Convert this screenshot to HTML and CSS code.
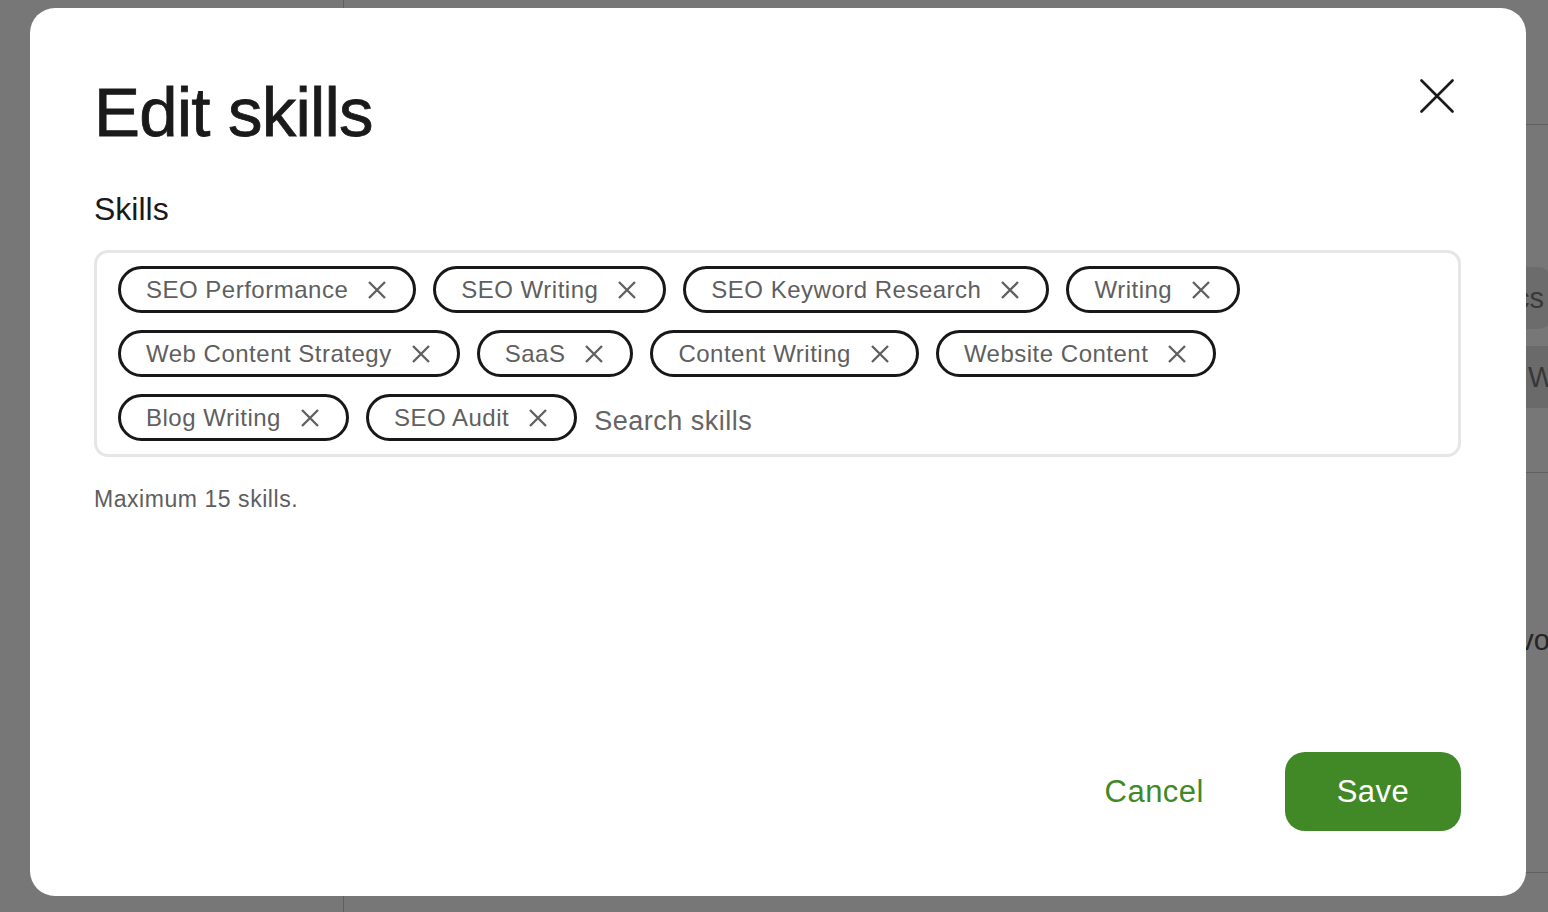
FILE: index.html
```html
<!DOCTYPE html>
<html lang="en">
<head>
  <meta charset="UTF-8">
  <title>Edit skills</title>
  <link rel="stylesheet" href="styles.css">
</head>
<body>
  <div class="page">
    <aside class="sidebar"></aside>
    <main class="main">
      <div class="bar"></div>
      <section class="sect">
        <div class="bg-tags">
          <span class="bg-tag">Analytics</span>
        </div>
        <div class="bg-block">Writing</div>
      </section>
      <section class="sect sect-low">
        <p class="bg-text">Provo, UT</p>
      </section>
    </main>
  </div>

  <div class="overlay">
    <div class="modal" role="dialog" aria-labelledby="modal-title">
      <div class="modal-head">
        <h1 id="modal-title">Edit skills</h1>
        <button class="close" aria-label="Close">
          <svg width="34" height="34" viewBox="0 0 34 34" fill="none" stroke="#1a1a1a" stroke-width="2.6" stroke-linecap="round">
            <path d="M1.5 1.5L32.5 32.5M32.5 1.5L1.5 32.5"/>
          </svg>
        </button>
      </div>

      <label class="field-label" for="skill-search">Skills</label>
      <div class="skills-box">
        <span class="chip">SEO Performance <svg class="x" viewBox="0 0 20 20"><path d="M2 2L18 18M18 2L2 18"/></svg></span>
        <span class="chip">SEO Writing <svg class="x" viewBox="0 0 20 20"><path d="M2 2L18 18M18 2L2 18"/></svg></span>
        <span class="chip">SEO Keyword Research <svg class="x" viewBox="0 0 20 20"><path d="M2 2L18 18M18 2L2 18"/></svg></span>
        <span class="chip">Writing <svg class="x" viewBox="0 0 20 20"><path d="M2 2L18 18M18 2L2 18"/></svg></span>
        <span class="chip">Web Content Strategy <svg class="x" viewBox="0 0 20 20"><path d="M2 2L18 18M18 2L2 18"/></svg></span>
        <span class="chip">SaaS <svg class="x" viewBox="0 0 20 20"><path d="M2 2L18 18M18 2L2 18"/></svg></span>
        <span class="chip">Content Writing <svg class="x" viewBox="0 0 20 20"><path d="M2 2L18 18M18 2L2 18"/></svg></span>
        <span class="chip">Website Content <svg class="x" viewBox="0 0 20 20"><path d="M2 2L18 18M18 2L2 18"/></svg></span>
        <span class="chip">Blog Writing <svg class="x" viewBox="0 0 20 20"><path d="M2 2L18 18M18 2L2 18"/></svg></span>
        <span class="chip">SEO Audit <svg class="x" viewBox="0 0 20 20"><path d="M2 2L18 18M18 2L2 18"/></svg></span>
        <input id="skill-search" class="search" type="text" placeholder="Search skills">
      </div>
      <p class="hint">Maximum 15 skills.</p>

      <div class="modal-foot">
        <button class="btn-link">Cancel</button>
        <button class="btn-primary">Save</button>
      </div>
    </div>
  </div>
</body>
</html>
```

FILE: styles.css
```css
body {
  margin: 0;
  height: 912px;
  overflow: hidden;
  font-family: 'Liberation Sans', Arial, sans-serif;
  color: #1a1a1a;
  background-color: #ffffff;
}

/* page behind the dialog */
.page {
  display: flex;
  height: 912px;
}
.sidebar {
  width: 343px;
  border-right: 1px solid #cdcdcd;
  flex-shrink: 0;
}
.main {
  flex: 1;
  overflow: hidden;
  display: flex;
  flex-direction: column;
}
.bar {
  height: 124px;
  border-bottom: 1px solid #cdcdcd;
}
.sect {
  height: 348px;
  border-bottom: 1px solid #cdcdcd;
  padding-top: 142px;
  box-sizing: border-box;
}
.bg-tags {
  display: flex;
  justify-content: flex-end;
}
.bg-tag {
  height: 62px;
  line-height: 62px;
  margin-right: -4px;
  padding: 0 8px 0 80px;
  border-radius: 14px;
  background-color: #e8e8e8;
  color: #7a7a7a;
  font-size: 29px;
  white-space: nowrap;
}
.bg-block {
  margin: 17px 0 0 1160px;
  height: 62px;
  line-height: 62px;
  padding-left: 24px;
  background-color: #e4e4e4;
  color: #787878;
  font-size: 29px;
  white-space: nowrap;
}
.sect-low {
  height: 400px;
  padding-top: 0;
}
.bg-text {
  margin: 151px 0 0 1130px;
  font-size: 29px;
  color: #4f4f4f;
  white-space: nowrap;
}

/* dialog */
.overlay {
  position: fixed;
  inset: 0;
  background-color: rgba(0, 0, 0, 0.535);
  display: flex;
  align-items: flex-start;
  padding: 8px 0 0 30px;
}
.modal {
  width: 1496px;
  height: 888px;
  box-sizing: border-box;
  padding: 64px 65px 65px 64px;
  background-color: #ffffff;
  border-radius: 25px;
  display: flex;
  flex-direction: column;
}
.modal-head {
  display: flex;
  justify-content: space-between;
  align-items: flex-start;
}
.modal-head h1 {
  margin: 0;
  font-size: 69px;
  line-height: 1.2;
  font-weight: 400;
  letter-spacing: -0.8px;
  -webkit-text-stroke: 0.8px #1a1a1a;
}
.close {
  width: 48px;
  height: 48px;
  padding: 0;
  border: none;
  background: none;
  display: flex;
  align-items: center;
  justify-content: center;
  cursor: pointer;
}

.field-label {
  display: block;
  margin-top: 35px;
  font-size: 32px;
  line-height: 1.2;
}
.skills-box {
  margin-top: 22px;
  border: 3px solid #e6e6e6;
  border-radius: 14px;
  padding: 13px 21px;
  display: flex;
  flex-wrap: wrap;
  gap: 17px;
}
.chip {
  height: 47px;
  box-sizing: border-box;
  border: 3px solid #181818;
  border-radius: 999px;
  padding: 0 26px 0 25px;
  display: inline-flex;
  align-items: center;
  gap: 19px;
  font-size: 24px;
  letter-spacing: 0.5px;
  color: #5f5f5f;
  white-space: nowrap;
}
.chip .x {
  width: 20px;
  height: 20px;
  fill: none;
  stroke: #5f5f5f;
  stroke-width: 2.3;
}
.search {
  flex: 1;
  min-width: 160px;
  height: 47px;
  box-sizing: border-box;
  padding: 8px 0 0;
  border: none;
  outline: none;
  font-family: inherit;
  font-size: 27px;
  letter-spacing: 0.5px;
  color: #1a1a1a;
}
.search::placeholder {
  color: #656565;
}
.hint {
  margin: 26px 0 0;
  font-size: 23px;
  line-height: 1.4;
  letter-spacing: 0.55px;
  color: #5e5e5e;
}

.modal-foot {
  margin-top: auto;
  display: flex;
  justify-content: flex-end;
  align-items: center;
  gap: 57px;
}
.btn-link,
.btn-primary {
  font-family: inherit;
  font-size: 31px;
  letter-spacing: 0.5px;
  border: none;
  cursor: pointer;
}
.btn-link {
  background: none;
  color: #418927;
  padding: 0 24px 0 0;
}
.btn-primary {
  width: 176px;
  height: 79px;
  border-radius: 20px;
  background-color: #418927;
  color: #ffffff;
}
```
